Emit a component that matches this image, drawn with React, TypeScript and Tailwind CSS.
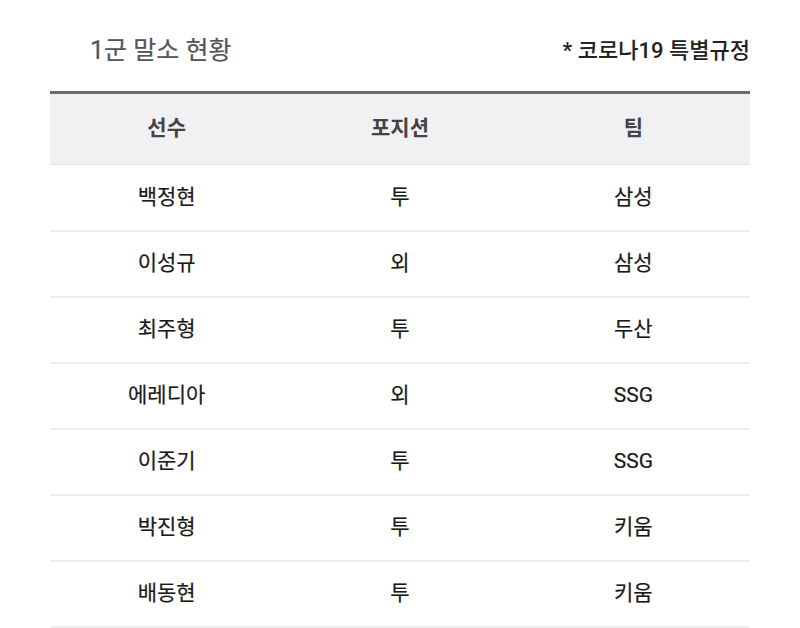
const rows = [
  { name: '백정현', pos: '투', team: '삼성' },
  { name: '이성규', pos: '외', team: '삼성' },
  { name: '최주형', pos: '투', team: '두산' },
  { name: '에레디아', pos: '외', team: 'SSG' },
  { name: '이준기', pos: '투', team: 'SSG' },
  { name: '박진형', pos: '투', team: '키움' },
  { name: '배동현', pos: '투', team: '키움' },
];

export default function App() {
  return (
    <div
      className="h-[628px] w-[800px] overflow-hidden bg-white px-[50px]"
      style={{ fontFamily: 'Roboto, "Noto Sans CJK KR", "Noto Sans", sans-serif' }}
    >
      <div className="flex h-[91px] items-center justify-between pt-[10px]">
        <h1 className="pl-[40px] text-[25px] font-normal text-[#555] [-webkit-text-stroke:0.2px_#555]">1군 말소 현황</h1>
        <span className="text-[22px] font-medium text-[#222]">* 코로나19 특별규정</span>
      </div>
      <table className="w-full table-fixed border-t-[3px] border-[#6b6b6b]">
        <thead>
          <tr className="h-[72px] border-b border-[#e3e3e3] bg-[#f1f1f3] text-[21px] text-[#444]">
            <th className="font-bold">선수</th>
            <th className="font-bold">포지션</th>
            <th className="font-bold">팀</th>
          </tr>
        </thead>
        <tbody>
          {rows.map((row) => (
            <tr
              key={row.name}
              className="h-[66px] border-b-2 border-[#eeeeee] text-center text-[21px] font-normal text-[#1a1a1a] [-webkit-text-stroke:0.2px_#1a1a1a]"
            >
              <td>{row.name}</td>
              <td>{row.pos}</td>
              <td>{row.team}</td>
            </tr>
          ))}
        </tbody>
      </table>
    </div>
  );
}
